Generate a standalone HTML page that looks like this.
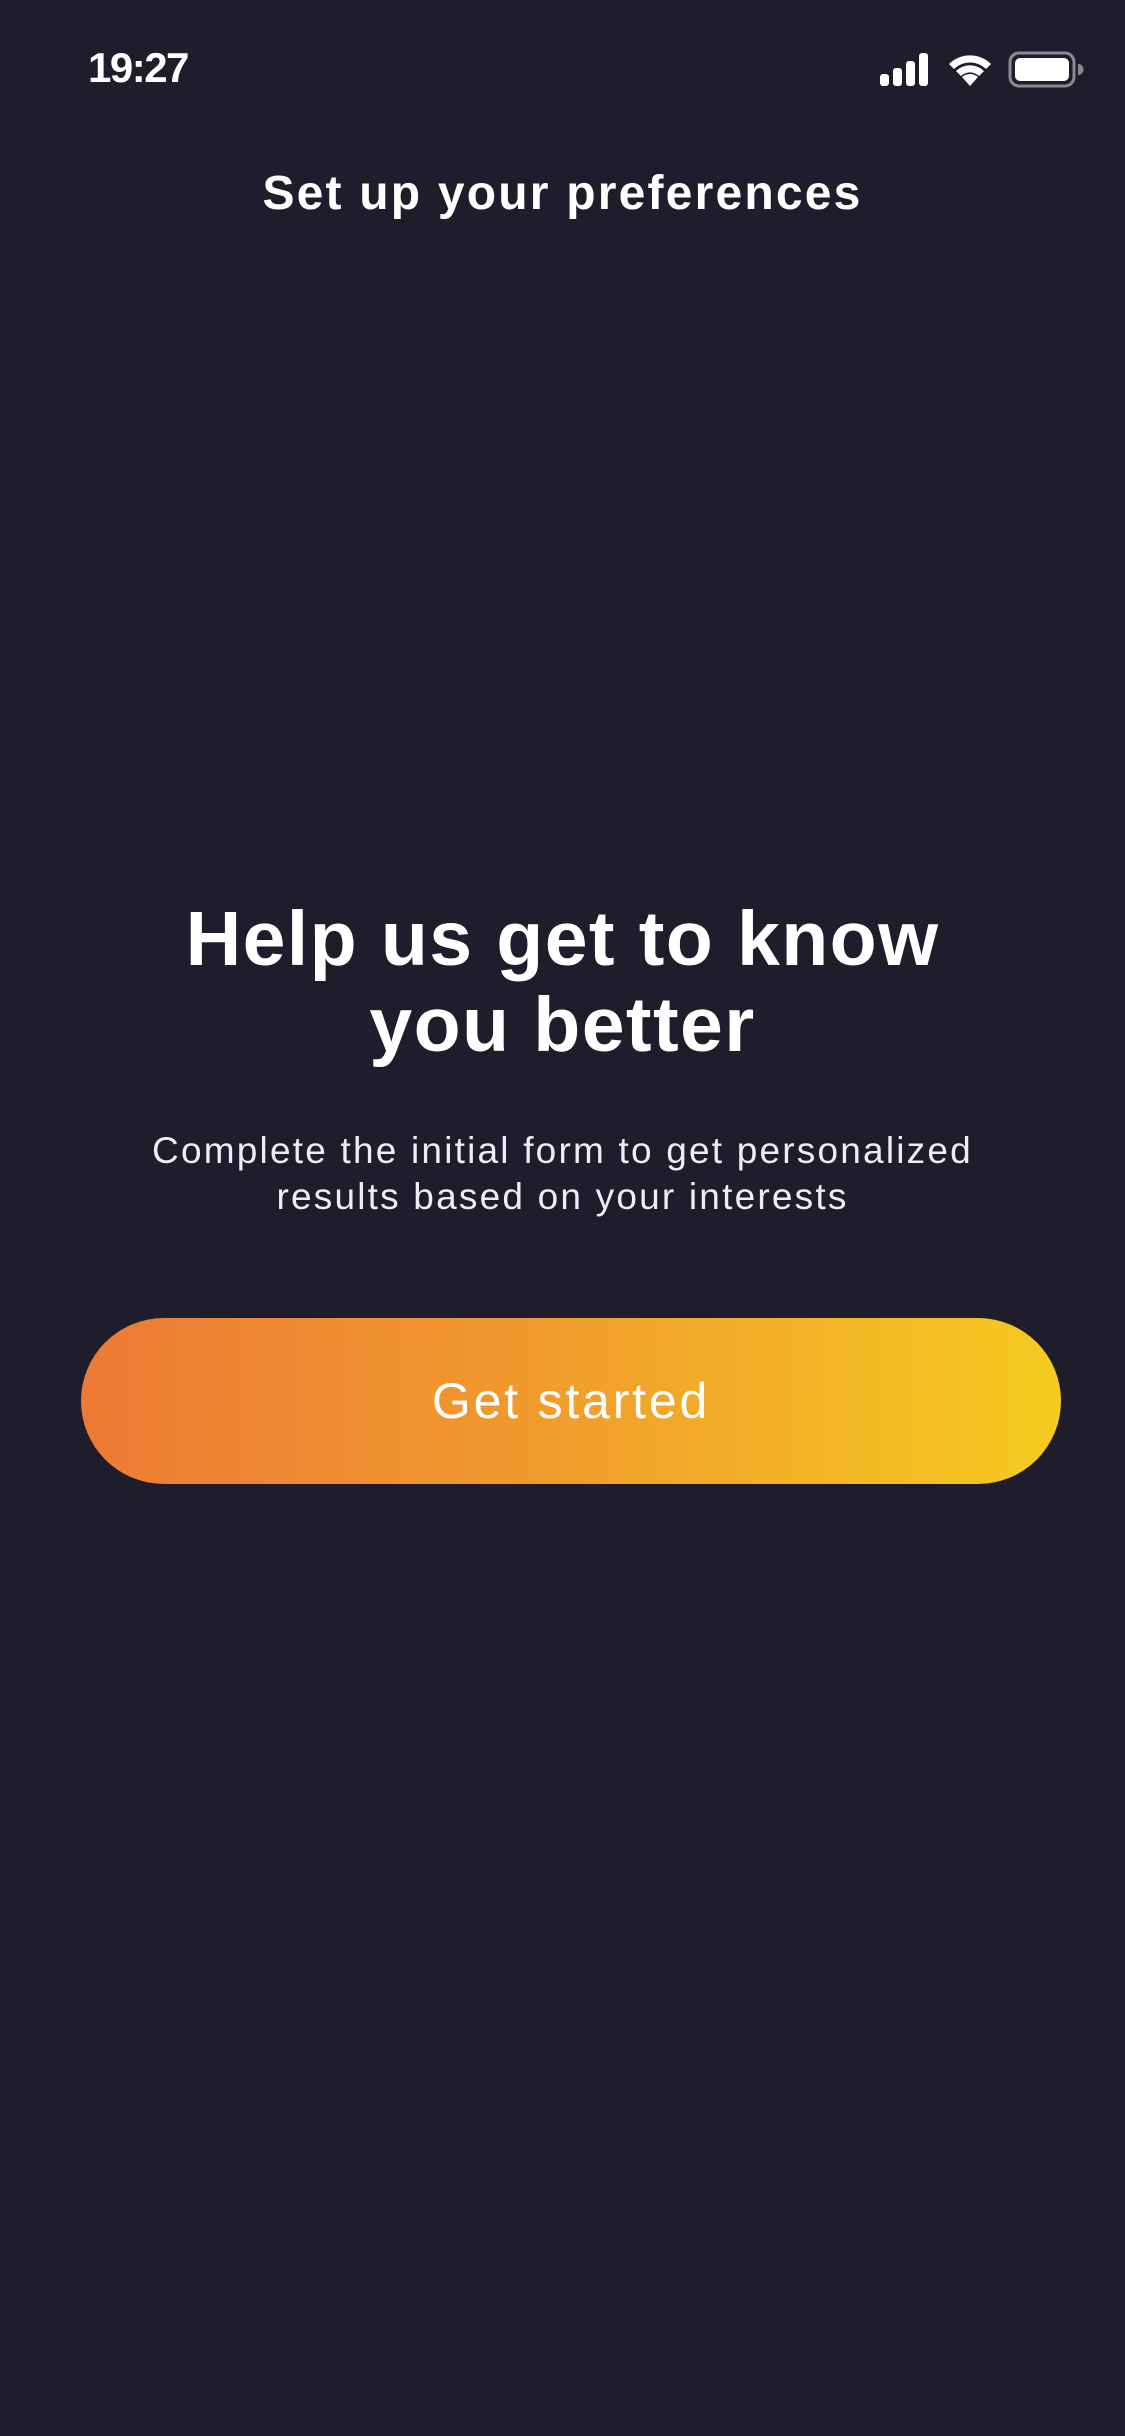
<!DOCTYPE html>
<html><head><meta charset="utf-8"><style>
html,body{margin:0;padding:0}
body{width:1125px;height:2436px;background:#1f1d2b;position:relative;overflow:hidden;font-family:"Liberation Sans",sans-serif;color:#fff}
.a{position:absolute;left:0;width:1125px;text-align:center}
</style></head><body>
<div style="position:absolute;left:88px;top:44px;font-size:42px;font-weight:bold;letter-spacing:-1.5px">19:27</div>
<svg style="position:absolute;left:878px;top:50px" width="210" height="40" viewBox="0 0 210 40">
<rect x="2" y="24" width="9" height="12" rx="3" fill="#fff"/>
<rect x="15" y="18" width="9" height="18" rx="3" fill="#fff"/>
<rect x="28" y="11" width="9" height="25" rx="3" fill="#fff"/>
<rect x="41" y="3" width="9" height="33" rx="3" fill="#fff"/>
<path d="M92 36 L84 27 A12 12 0 0 1 100 27 Z" fill="#fff"/>
<path d="M78 21 A20 20 0 0 1 106 21 L101 26 A13 13 0 0 0 83 26 Z" fill="#fff"/>
<path d="M71 14 A30 30 0 0 1 113 14 L108 19 A23 23 0 0 0 76 19 Z" fill="#fff"/>
<rect x="132" y="3" width="64" height="33" rx="9" fill="none" stroke="#8a8a92" stroke-width="3"/>
<rect x="137" y="8" width="54" height="23" rx="5" fill="#fff"/>
<path d="M200 14 a5 5 0 0 1 0 11 z" fill="#8a8a92"/>
</svg>
<div class="a" style="top:164px;font-size:48px;font-weight:bold;line-height:60px;letter-spacing:2.2px">Set up your preferences</div>
<div class="a" style="top:896px;font-size:77px;font-weight:bold;line-height:86px;letter-spacing:1.4px">Help us get to know<br>you better</div>
<div class="a" style="top:1128px;font-size:37px;line-height:46px;color:#eeeef2;letter-spacing:2.2px">Complete the initial form to get personalized<br>results based on your interests</div>
<div style="position:absolute;left:81px;top:1318px;width:980px;height:166px;border-radius:83px;background:linear-gradient(90deg,#ed7a35,#f09a2d 45%,#f5cb20);text-align:center;line-height:166px;font-size:50px;letter-spacing:2.8px">Get started</div>
</body></html>
